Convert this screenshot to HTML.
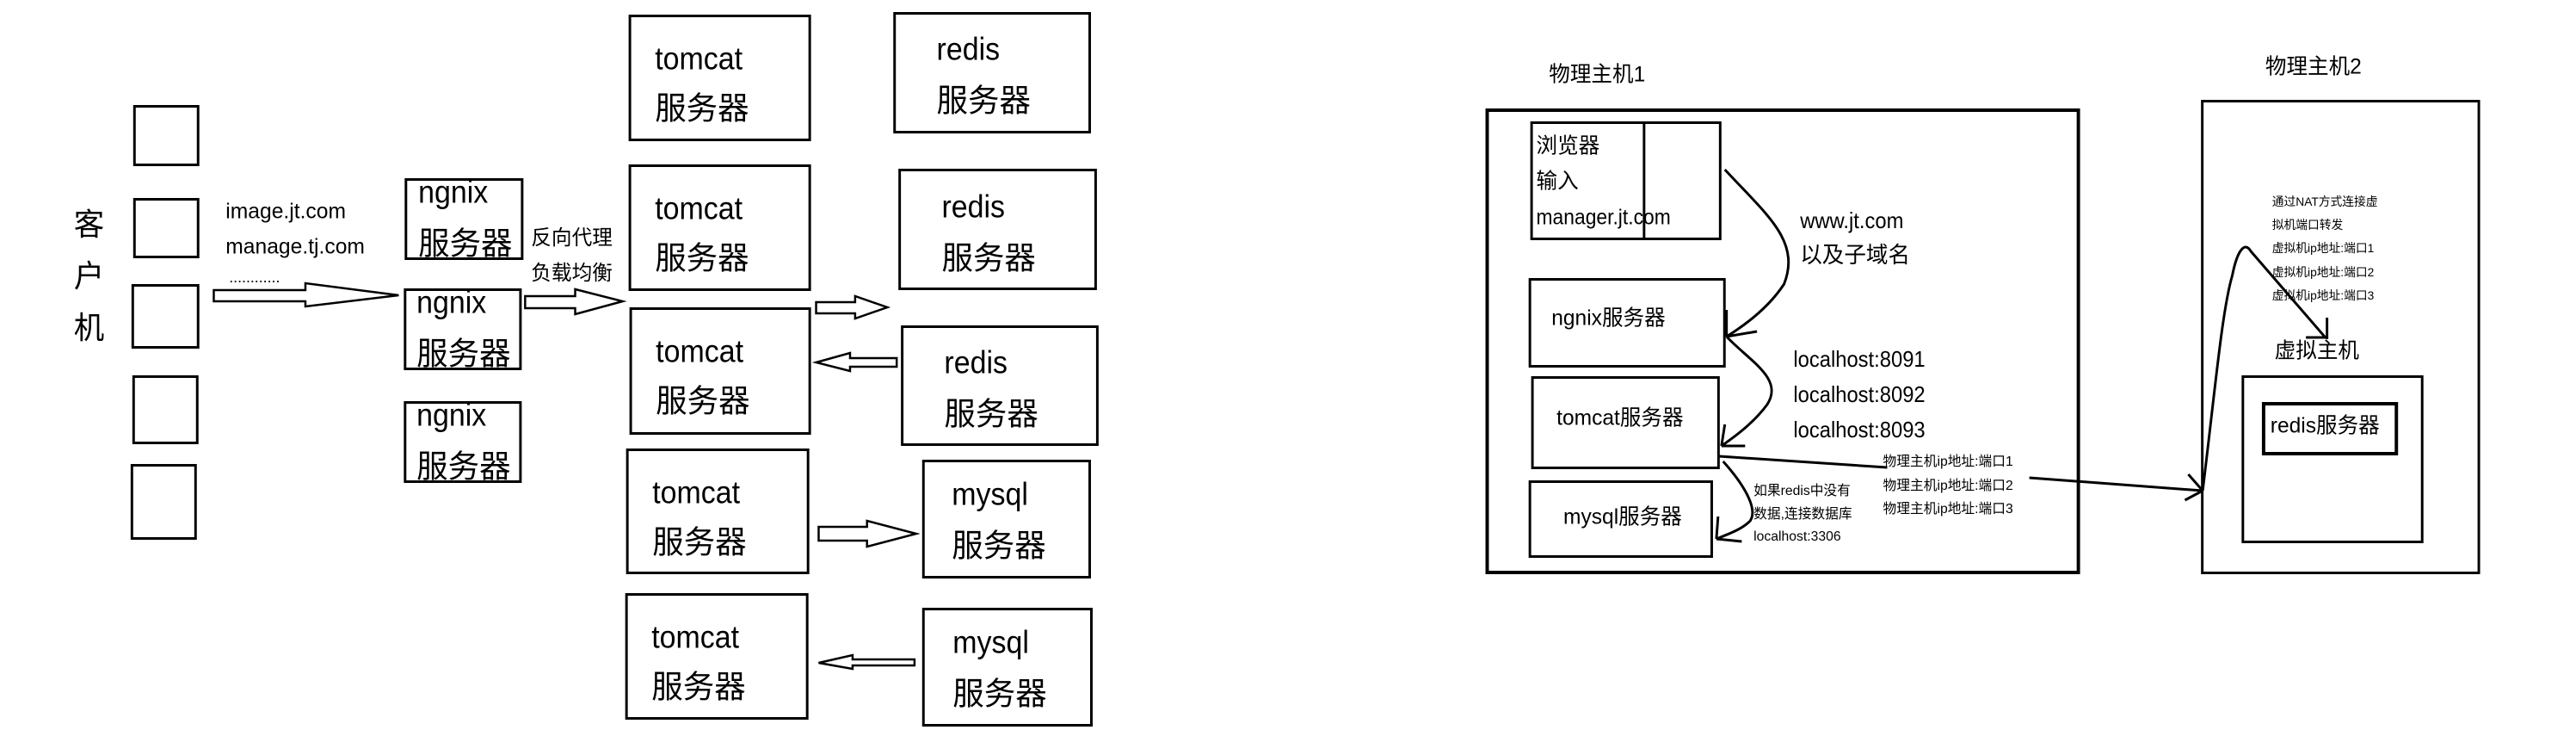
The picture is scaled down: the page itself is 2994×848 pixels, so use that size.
<!DOCTYPE html>
<html><head><meta charset="utf-8"><style>
body{margin:0;width:2994px;height:848px;background:#fff;position:relative;overflow:hidden;font-family:"Liberation Sans","Noto Sans CJK SC",sans-serif;color:#000}
.wrap{position:absolute;left:0;top:0;width:2994px;height:848px}
.b{position:absolute;border:3px solid #000;box-sizing:border-box}
.t{position:absolute;white-space:nowrap;line-height:1;transform:translateY(-50%)}
.n{transform:translateY(-50%) scaleX(0.93);transform-origin:0 50%}
.L{font-size:37px}
svg{position:absolute;left:0;top:0}
</style></head><body>
<div class="wrap" style="transform:scaleX(0.986);transform-origin:0 0">
<div class="b" style="left:157px;top:122px;width:78px;height:71px"></div>
<div class="b" style="left:157px;top:230px;width:78px;height:70px"></div>
<div class="b" style="left:155px;top:330px;width:80px;height:75px"></div>
<div class="b" style="left:156px;top:436px;width:78px;height:80px"></div>
<div class="b" style="left:154px;top:539px;width:78px;height:88px"></div>
<div class="t" style="left:87px;top:261px;font-size:36px">客</div>
<div class="t" style="left:87px;top:321px;font-size:36px">户</div>
<div class="t" style="left:87px;top:381px;font-size:36px">机</div>
<div class="t" style="left:266px;top:246px;font-size:25px">image.jt.com</div>
<div class="t" style="left:266px;top:287px;font-size:25px">manage.tj.com</div>
<div class="t" style="left:270px;top:322px;font-size:18px">............</div>
<div class="b" style="left:477px;top:207px;width:140px;height:95px"></div>
<div class="b" style="left:476px;top:335px;width:139px;height:95px"></div>
<div class="b" style="left:476px;top:466px;width:139px;height:95px"></div>
<div class="t L n" style="left:493px;top:223px">ngnix</div><div class="t L" style="left:493px;top:283px">服务器</div>
<div class="t L n" style="left:491px;top:351px">ngnix</div><div class="t L" style="left:491px;top:411px">服务器</div>
<div class="t L n" style="left:491px;top:482px">ngnix</div><div class="t L" style="left:491px;top:542px">服务器</div>
<div class="t" style="left:626px;top:277px;font-size:24px">反向代理</div>
<div class="t" style="left:626px;top:318px;font-size:24px">负载均衡</div>
<div class="b" style="left:741px;top:17px;width:215px;height:147px"></div>
<div class="b" style="left:741px;top:191px;width:215px;height:147px"></div>
<div class="b" style="left:742px;top:357px;width:214px;height:148px"></div>
<div class="b" style="left:738px;top:521px;width:216px;height:146px"></div>
<div class="b" style="left:737px;top:689px;width:216px;height:147px"></div>
<div class="t L n" style="left:772px;top:68px">tomcat</div><div class="t L" style="left:772px;top:126px">服务器</div>
<div class="t L n" style="left:772px;top:242px">tomcat</div><div class="t L" style="left:772px;top:300px">服务器</div>
<div class="t L n" style="left:773px;top:408px">tomcat</div><div class="t L" style="left:773px;top:466px">服务器</div>
<div class="t L n" style="left:769px;top:572px">tomcat</div><div class="t L" style="left:769px;top:630px">服务器</div>
<div class="t L n" style="left:768px;top:740px">tomcat</div><div class="t L" style="left:768px;top:798px">服务器</div>
<div class="b" style="left:1053px;top:14px;width:233px;height:141px"></div>
<div class="b" style="left:1059px;top:196px;width:234px;height:141px"></div>
<div class="b" style="left:1062px;top:378px;width:233px;height:140px"></div>
<div class="b" style="left:1087px;top:534px;width:199px;height:138px"></div>
<div class="b" style="left:1087px;top:706px;width:201px;height:138px"></div>
<div class="t L n" style="left:1104px;top:57px">redis</div><div class="t L" style="left:1104px;top:117px">服务器</div>
<div class="t L n" style="left:1110px;top:240px">redis</div><div class="t L" style="left:1110px;top:300px">服务器</div>
<div class="t L n" style="left:1113px;top:421px">redis</div><div class="t L" style="left:1113px;top:481px">服务器</div>
<div class="t L n" style="left:1122px;top:574px">mysql</div><div class="t L" style="left:1122px;top:634px">服务器</div>
<div class="t L n" style="left:1123px;top:746px">mysql</div><div class="t L" style="left:1123px;top:806px">服务器</div>
<svg width="1400" height="848" fill="none" stroke="#000" stroke-width="2.5">
<path d="M252 337 H360 V329 L470 343 L360 356 V350 H252 Z"/>
<path d="M619 344 H678 V336 L734 350 L678 365 V358 H619 Z"/>
<path d="M962 351 H1008 V344 L1046 357 L1008 370 V364 H962 Z"/>
<path d="M1057 416 H1002 V410 L962 421 L1002 431 V426 H1057 Z"/>
<path d="M965 612 H1022 V605 L1080 620 L1022 635 V628 H965 Z"/>
<path d="M1078 766 H1005 V761 L965 770 L1005 777 V773 H1078 Z"/>
</svg>
</div>

<div class="wrap" style="transform:scaleX(0.983);transform-origin:1700px 0">
<div class="t" style="left:1802px;top:87px;font-size:25px">物理主机1</div>
<div class="t" style="left:2649px;top:78px;font-size:25px">物理主机2</div>
<div class="b" style="left:1727px;top:126px;width:703px;height:541px;border-width:4px"></div>
<div class="b" style="left:1780px;top:141px;width:226px;height:138px"></div>
<div style="position:absolute;left:1913px;top:141px;width:3px;height:138px;background:#000"></div>
<div class="t" style="left:1787px;top:170px;font-size:25px">浏览器</div>
<div class="t" style="left:1787px;top:211px;font-size:25px">输入</div>
<div class="t n" style="left:1787px;top:253px;font-size:25px">manager.jt.com</div>
<div class="b" style="left:1778px;top:323px;width:233px;height:104px"></div>
<div class="t" style="left:1805px;top:370px;font-size:25px">ngnix服务器</div>
<div class="b" style="left:1781px;top:437px;width:223px;height:108px"></div>
<div class="t" style="left:1811px;top:486px;font-size:25px">tomcat服务器</div>
<div class="b" style="left:1778px;top:558px;width:218px;height:90px"></div>
<div class="t" style="left:1819px;top:601px;font-size:25px">mysql服务器</div>
<div class="t n" style="left:2099px;top:256px;font-size:26px">www.jt.com</div>
<div class="t" style="left:2099px;top:296px;font-size:26px">以及子域名</div>
<div class="t n" style="left:2091px;top:417px;font-size:26px">localhost:8091</div>
<div class="t n" style="left:2091px;top:458px;font-size:26px">localhost:8092</div>
<div class="t n" style="left:2091px;top:499px;font-size:26px">localhost:8093</div>
<div class="t" style="left:2044px;top:571px;font-size:16px">如果redis中没有</div>
<div class="t" style="left:2044px;top:598px;font-size:16px">数据,连接数据库</div>
<div class="t" style="left:2044px;top:624px;font-size:16px">localhost:3306</div>
<div class="t" style="left:2197px;top:537px;font-size:16px">物理主机ip地址:端口1</div>
<div class="t" style="left:2197px;top:565px;font-size:16px">物理主机ip地址:端口2</div>
<div class="t" style="left:2197px;top:592px;font-size:16px">物理主机ip地址:端口3</div>
<div class="b" style="left:2573px;top:116px;width:330px;height:551px"></div>
<div class="t" style="left:2657px;top:234px;font-size:14px">通过NAT方式连接虚</div>
<div class="t" style="left:2657px;top:261px;font-size:14px">拟机端口转发</div>
<div class="t" style="left:2657px;top:288px;font-size:14px">虚拟机ip地址:端口1</div>
<div class="t" style="left:2657px;top:316px;font-size:14px">虚拟机ip地址:端口2</div>
<div class="t" style="left:2657px;top:343px;font-size:14px">虚拟机ip地址:端口3</div>
<div class="t" style="left:2660px;top:408px;font-size:25px">虚拟主机</div>
<div class="b" style="left:2621px;top:436px;width:215px;height:195px"></div>
<div class="b" style="left:2645px;top:467px;width:161px;height:62px;border-width:4px"></div>
<div class="t" style="left:2655px;top:495px;font-size:25px">redis服务器</div>
<svg width="2994" height="848" fill="none" stroke="#000" stroke-width="3">
<path d="M2010 197 C2060 250 2100 280 2080 330 C2060 360 2030 380 2012 391 M2012 391 L2048 385 M2012 391 L2012 360"/>
<path d="M2012 391 C2040 420 2080 440 2060 470 C2045 490 2025 505 2006 518 M2006 518 L2034 518 M2006 518 L2010 493"/>
<path d="M2008 536 C2030 560 2050 590 2040 605 C2030 615 2015 620 2000 626 M2000 626 L2030 629 M2000 626 L2002 600"/>
<path d="M2003 530 L2202 543 M2370 555 L2575 570 M2575 570 L2554 581 M2575 570 L2558 551"/>
<path d="M2575 570 C2590 450 2598 360 2610 320 C2616 290 2625 280 2632 292 L2720 392 M2722 369 L2722 394 M2697 392 L2722 392"/>
</svg>
</div>
</body></html>
